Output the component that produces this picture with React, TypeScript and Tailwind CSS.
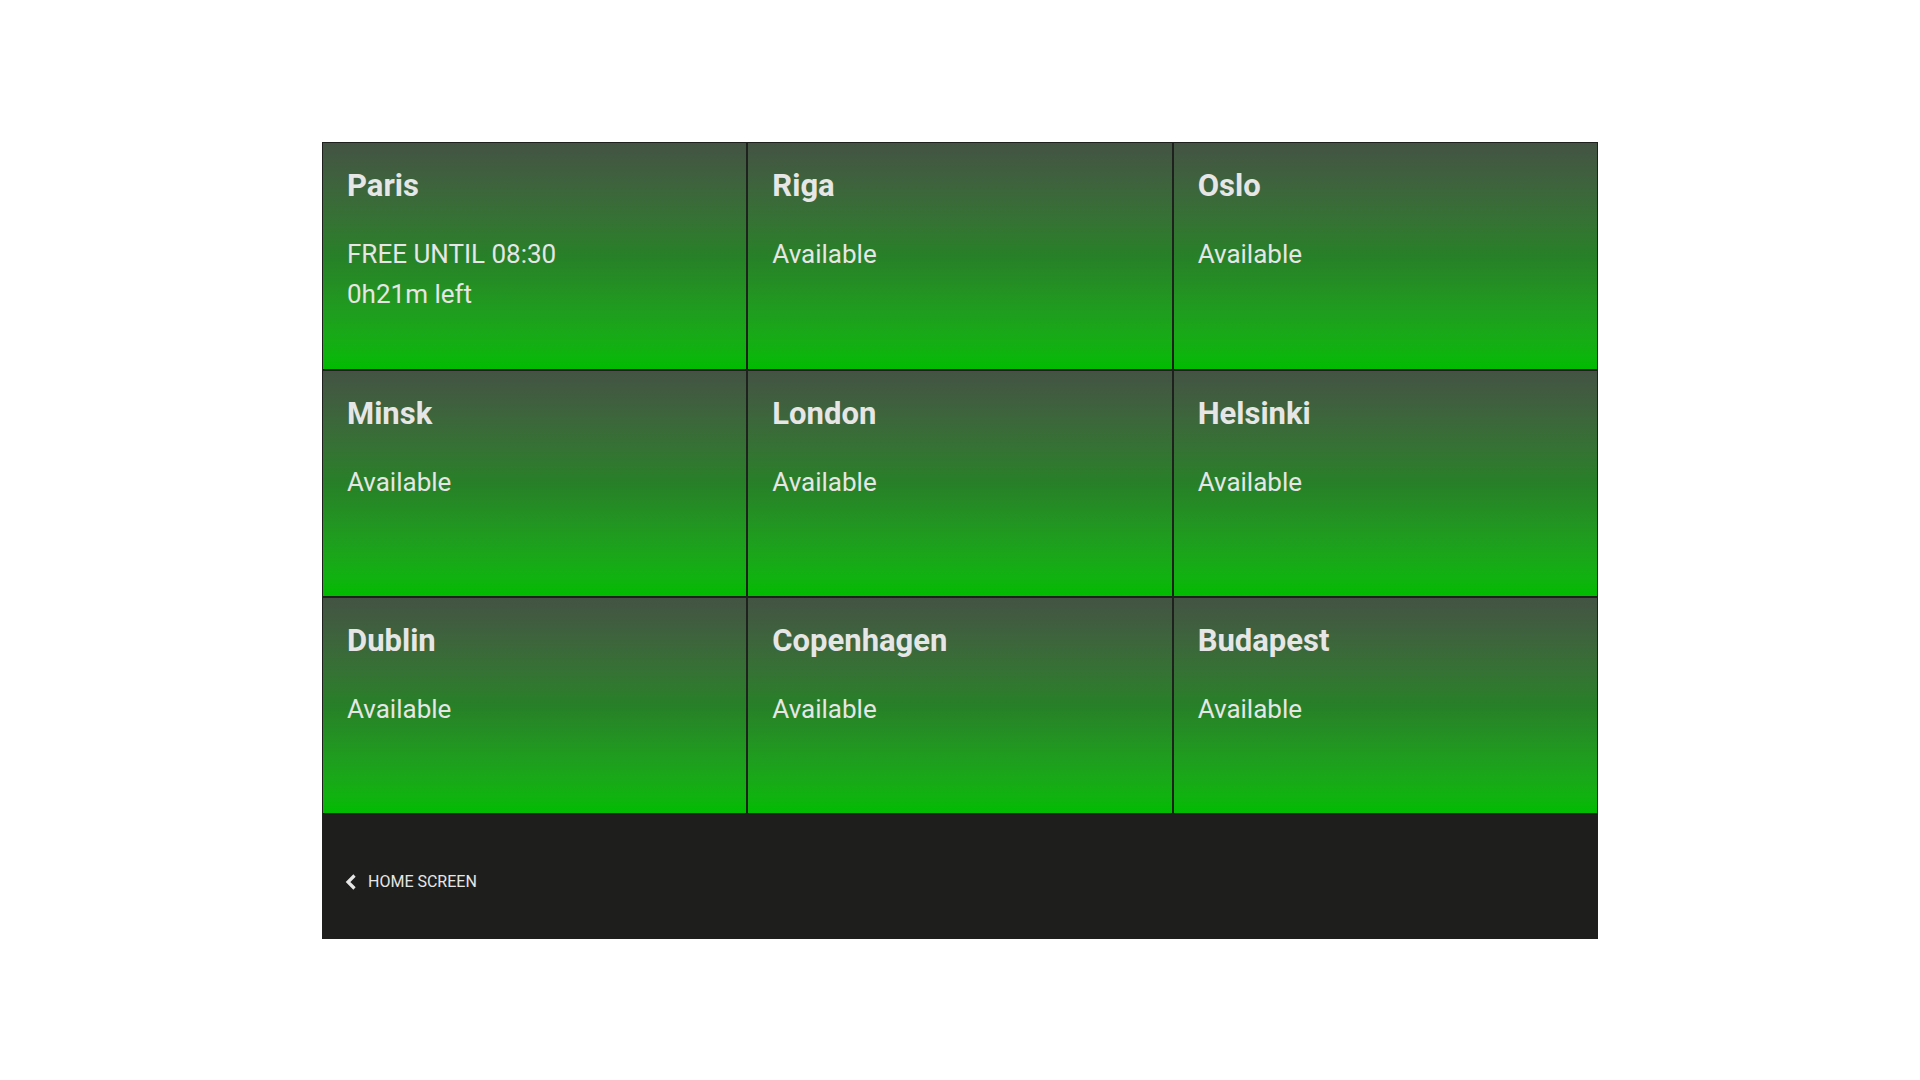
import React from "react";

type Room = { name: string; lines: string[] };

const rooms: Room[] = [
  { name: "Paris", lines: ["FREE UNTIL 08:30", "0h21m left"] },
  { name: "Riga", lines: ["Available"] },
  { name: "Oslo", lines: ["Available"] },
  { name: "Minsk", lines: ["Available"] },
  { name: "London", lines: ["Available"] },
  { name: "Helsinki", lines: ["Available"] },
  { name: "Dublin", lines: ["Available"] },
  { name: "Copenhagen", lines: ["Available"] },
  { name: "Budapest", lines: ["Available"] },
];

function RoomCell({ room }: { room: Room }) {
  return (
    <div className="border border-[#1f211f] bg-gradient-to-b from-[#435343] via-[#278027] via-50% to-[#00bc00] pl-[24px] pt-[25px] overflow-hidden">
      <div className="text-[31px] leading-[36px] font-bold text-[#e6e6e6]">{room.name}</div>
      <div className="mt-[30px]">
        {room.lines.map((l) => (
          <div key={l} className="text-[26px] leading-[40px] text-[#e6e6e6]">
            {l}
          </div>
        ))}
      </div>
    </div>
  );
}

export default function App() {
  return (
    <div
      className="w-full h-screen bg-white flex items-center justify-center"
      style={{ fontFamily: "Roboto, 'Liberation Sans', sans-serif" }}
    >
      <div className="w-[1276px] flex flex-col">
        <div className="grid grid-cols-3 grid-rows-[228px_227px_217px]">
          {rooms.map((r) => (
            <RoomCell key={r.name} room={r} />
          ))}
        </div>
        <div className="h-[125px] bg-[#1e1f1d] flex items-center pl-[23px] pt-[11px]">
          <svg width="12" height="16" viewBox="0 0 12 16" className="mr-[11px]">
            <polyline
              points="9.5,1.5 3,8 9.5,14.5"
              fill="none"
              stroke="#e6e6e6"
              strokeWidth="3.2"
              strokeLinejoin="miter"
            />
          </svg>
          <span className="text-[16px] leading-[24px] text-[#e6e6e6]">HOME SCREEN</span>
        </div>
      </div>
    </div>
  );
}
